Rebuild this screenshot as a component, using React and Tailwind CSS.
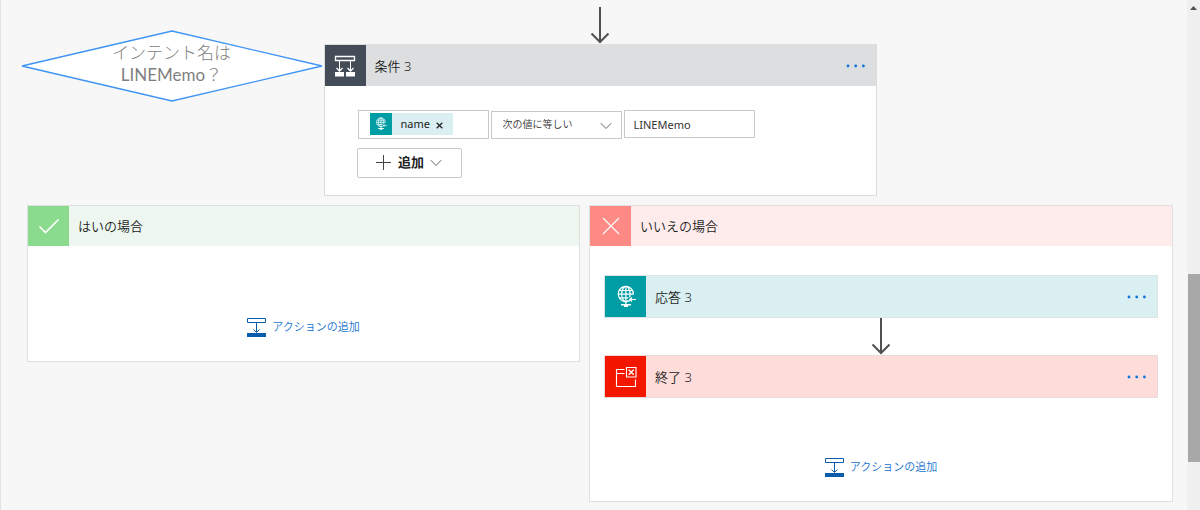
import React from 'react';

const operators = ['次の値に等しい', '次の値に等しくない', '次の値を含む'];

function ConditionIcon() {
  return (
    <svg className="w-6 h-6" viewBox="0 0 24 24" fill="none" stroke="#fff">
      <path d="M2.500 2.500h19v4h-19z" strokeWidth="1.300" />
      <path d="M6.500 6.500V17M17.500 6.500V17" />
      <path d="M3.500 14l3 3 3-3M14.500 14l3 3 3-3" strokeWidth="1.300" />
      <path d="M2 18h9v4.500H2zM13 18h9v4.500h-9z" fill="#fff" stroke="none" />
    </svg>
  );
}

function GlobeIcon({ className }) {
  return (
    <svg className={className} viewBox="0 0 24 24" fill="none" stroke="#fff" strokeWidth="1.200">
      <path d="M17 14.600A7.600 7.600 0 1 1 19.400 9.500" />
      <path d="M15.500 12.500c.4-1.100.6-2.300.6-3.500 0-4.200-1.900-7.600-4.200-7.600S7.700 4.800 7.700 9s1.900 7.600 4.200 7.600c.9 0 1.700-.4 2.400-1.200" />
      <path d="M11.900 1.400v15.200M5.300 5.500h13.200M4.300 9.200h15M5.300 12.900h9" />
      <path d="M22 14.500h-6M18 12.500l-2.200 2 2.200 2" />
      <path d="M11.900 16.600v3" />
      <path d="M7 19.700h10M10 21.200h4" strokeWidth="1.600" />
    </svg>
  );
}

function TerminateIcon() {
  return (
    <svg className="w-6 h-6" viewBox="0 0 24 24" fill="none" stroke="#fff" strokeWidth="1.100">
      <path d="M10.500 4.500h-8v17h19v-7" />
      <path d="M2.500 8.500h8" />
      <path d="M12.500 2.500h9.500v9.500h-9.500z" />
      <path d="M14.700 4.700l5 5M19.700 4.700l-5 5" strokeWidth="1.400" />
    </svg>
  );
}

function CheckIcon() {
  return (
    <svg className="w-6 h-6" viewBox="0 0 24 24" fill="none" stroke="#fff" strokeWidth="1.600">
      <path d="M2.500 12.500l6 6L21.500 5.500" />
    </svg>
  );
}

function CrossIcon() {
  return (
    <svg className="w-6 h-6" viewBox="0 0 24 24" fill="none" stroke="#fff" strokeWidth="1.100">
      <path d="M4 4l16 16M20 4L4 20" />
    </svg>
  );
}

function Chevron({ className }) {
  return (
    <svg className={className} width="12" height="8" viewBox="0 0 12 8" fill="none" stroke="#666">
      <path d="M.8 1.200L6 6.500l5.200-5.300" />
    </svg>
  );
}

function FlowArrow() {
  return (
    <svg className="mx-auto block" width="20" height="37" viewBox="0 0 20 37" fill="none" stroke="#505050" strokeWidth="2">
      <path d="M10 0v35" />
      <path d="M1.500 26.500L10 35l8.500-8.500" />
    </svg>
  );
}

function MoreButton() {
  return (
    <button type="button" aria-label="メニュー" className="ml-auto flex h-6 items-center px-2.5">
      <svg width="20" height="4" viewBox="0 0 20 4" fill="#0f75d8">
        <circle cx="2" cy="2" r="1.400" />
        <circle cx="9.700" cy="2" r="1.400" />
        <circle cx="17.400" cy="2" r="1.400" />
      </svg>
    </button>
  );
}

function CardHeader({ icon, title, iconClass, barClass, menu }) {
  return (
    <div className={`flex items-center ${barClass}`}>
      <div className={`flex w-[41px] self-stretch items-center justify-center ${iconClass}`}>
        {icon}
      </div>
      <h2 className="pl-[9px] text-[13px] leading-5 font-[350] text-[#1c1c1c]">{title}</h2>
      {menu && <MoreButton />}
    </div>
  );
}

function AddAction() {
  return (
    <button type="button" className="mx-auto flex h-5 items-center gap-1.5 text-[11px] font-[350] text-[#1672d0]">
      <svg width="19" height="19" viewBox="0 0 19 19" fill="none" stroke="#0a5cad">
        <path d="M.5.500h18v4H.500z" />
        <path d="M9.500 4.500V14M6.500 11.500l3 3 3-3" />
        <path d="M0 15h19v4H0z" fill="#0a5cad" stroke="none" />
      </svg>
      アクションの追加
    </button>
  );
}

function IntentNote() {
  return (
    <div className="relative w-[302px] h-[72px] shrink-0 pt-3 text-center text-[17px] leading-[22px] text-[#808080] font-light">
      <svg className="absolute inset-0" width="302" height="72" viewBox="0 0 302 72">
        <path d="M1 36L151 1l150 35-150 35z" fill="#fff" stroke="#3f94f6" strokeWidth="1.300" />
      </svg>
      <p className="relative">
        インテント名は
        <br />
        <span className="font-['Lato'] font-normal">LINEMemo</span>？
      </p>
    </div>
  );
}

function ConditionCard() {
  return (
    <section className="border border-[#dcdcdc] bg-white">
      <CardHeader
        icon={<ConditionIcon />}
        title="条件 3"
        iconClass="bg-[#444c58]"
        barClass="h-[41px] bg-[#dddee0]"
        menu
      />
      <div className="px-8 pt-6 pb-[17px]">
        <div className="flex items-start gap-0.5 px-px">
          <div className="flex h-[29px] w-[131px] items-start border border-[#c8c8c8] pl-[11px] pt-0.5">
            <div className="flex h-[22px] items-center bg-[#d9eff1] text-[11px] text-[#222]">
              <span className="flex size-[22px] items-center justify-center bg-[#009da5]">
                <GlobeIcon className="size-3.5" />
              </span>
              <span className="pl-[9px]">name</span>
              <button type="button" aria-label="削除" className="flex h-full items-center pl-1.5 pr-2.5 pt-0.5">
                <svg width="7" height="7" viewBox="0 0 7 7" fill="none" stroke="#222" strokeWidth="1.300">
                  <path d="M.7.700l5.600 5.600M6.300.700L.700 6.300" />
                </svg>
              </button>
            </div>
          </div>
          <div className="relative">
            <select
              aria-label="演算子"
              className="h-7 w-[131px] appearance-none border border-[#c8c8c8] bg-white pl-[11px] text-[10px] font-[350] text-[#333]"
            >
              {operators.map((op) => (
                <option key={op}>{op}</option>
              ))}
            </select>
            <Chevron className="pointer-events-none absolute right-2.5 top-3" />
          </div>
          <input
            type="text"
            aria-label="値"
            defaultValue="LINEMemo"
            className="h-7 w-[131px] border border-[#c8c8c8] bg-white pl-[9px] text-[11px] text-[#333]"
          />
        </div>
        <button
          type="button"
          className="mt-[9px] flex h-[30px] w-[105px] items-center justify-center gap-1.5 rounded-xs border border-[#c8c8c8] text-[13px] font-bold text-[#222]"
        >
          <svg width="16" height="16" viewBox="0 0 16 16" fill="none" stroke="#444">
            <path d="M7.500 0v15M0 7.500h15" />
          </svg>
          追加
          <Chevron />
        </button>
      </div>
    </section>
  );
}

function Scrollbar() {
  return (
    <div className="flex w-[13px] shrink-0 flex-col bg-[#f0f0f0]">
      <svg className="mx-auto mt-1.5" width="7" height="5" viewBox="0 0 7 5" fill="#505050">
        <path d="M3.500 0L7 4H0z" />
      </svg>
      <div className="flex-[263]" />
      <div className="ml-px flex-[188] bg-[#a8a8a8]" />
      <div className="flex-[48]" />
    </div>
  );
}

export default function App() {
  return (
    <div className="flex min-h-screen bg-[#f7f7f7] font-['Noto_Sans','Noto_Sans_CJK_JP',sans-serif]">
      <main className="min-w-0 flex-1 border-l border-[#e2e2e2] pl-[26px] pr-3.5 pb-2">
        <div className="grid grid-cols-[minmax(0,1fr)_553px_minmax(0,1fr)] items-start">
          <div className="flex justify-end pt-[30px] pr-px">
            <IntentNote />
          </div>
          <div className="pt-[7px]">
            <FlowArrow />
            <ConditionCard />
          </div>
        </div>

        <div className="mt-[9px] grid grid-cols-[553fr_584fr] items-start gap-[9px]">
          <section className="border border-[#e0e0e0] bg-white pb-6">
            <CardHeader
              icon={<CheckIcon />}
              title="はいの場合"
              iconClass="bg-[#8bdb8e]"
              barClass="h-10 bg-[#edf7ef]"
            />
            <div className="pt-[71px]">
              <AddAction />
            </div>
          </section>

          <section className="border border-[#e0e0e0] bg-white pb-6">
            <CardHeader
              icon={<CrossIcon />}
              title="いいえの場合"
              iconClass="bg-[#fd8a84]"
              barClass="h-10 bg-[#feecec]"
            />
            <div className="px-3.5 pt-[29px]">
              <div className="border border-[#dfe3e3]">
                <CardHeader
                  icon={<GlobeIcon className="w-6 h-6" />}
                  title="応答 3"
                  iconClass="bg-[#009da5]"
                  barClass="h-[41px] bg-[#d9eff1]"
                  menu
                />
              </div>
              <FlowArrow />
              <div className="border border-[#e8dada]">
                <CardHeader
                  icon={<TerminateIcon />}
                  title="終了 3"
                  iconClass="bg-[#f41700]"
                  barClass="h-[41px] bg-[#fddcda]"
                  menu
                />
              </div>
            </div>
            <div className="pt-[59px]">
              <AddAction />
            </div>
          </section>
        </div>
      </main>
      <Scrollbar />
    </div>
  );
}
